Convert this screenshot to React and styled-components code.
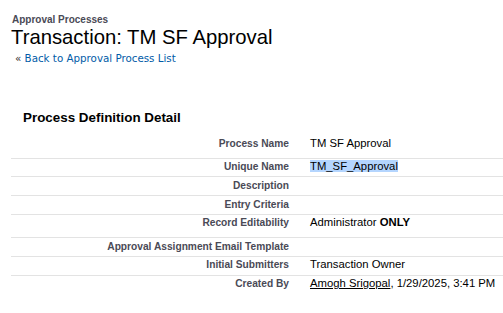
import styled, { createGlobalStyle } from "styled-components";

const GlobalStyle = createGlobalStyle`
  html, body {
    margin: 0;
    padding: 0;
    background: #fff;
  }
  body {
    font-family: "Liberation Sans", Arial, sans-serif;
    color: #000;
  }
`;

const Page = styled.div`
  padding: 14px 0 0 11px;
  width: 492px;
`;

const PageType = styled.div`
  font-size: 10px;
  font-weight: bold;
  line-height: 12px;
  color: #4a4a56;
  margin-left: 1px;
`;

const Title = styled.h1`
  margin: 0;
  font-size: 20.3px;
  font-weight: normal;
  line-height: 22px;
  color: #000;
`;

const Breadcrumb = styled.div`
  margin: 4px 0 0 4px;
  font-family: "DejaVu Sans", Verdana, sans-serif;
  font-size: 10.3px;
  line-height: 13px;
  color: #333;

  a {
    color: #015ba7;
    text-decoration: none;
  }
`;

const SectionTitle = styled.h2`
  margin: 44.6px 0 0 12px;
  font-size: 13.4px;
  font-weight: bold;
  line-height: 16px;
  color: #000;
`;

const DetailList = styled.div`
  margin-top: 9.8px;
`;

const Row = styled.div`
  display: grid;
  grid-template-columns: 278px 1fr;
  padding: 1.3px 0 ${({ $tall }) => ($tall ? "8px" : "3.5px")};
  border-bottom: 1px solid ${({ $last }) => ($last ? "transparent" : "#e3e3e3")};
`;

const Label = styled.div`
  text-align: right;
  font-size: 10.2px;
  font-weight: bold;
  line-height: 13px;
  color: #4a4a56;
`;

const Value = styled.div`
  padding-left: 21px;
  font-size: 11.3px;
  line-height: 13px;
  color: #000;
  white-space: nowrap;
`;

const Selected = styled.span`
  background: #b4d5fe;
`;

const UserLink = styled.a`
  color: #000;
  text-decoration: underline;
`;

const rows = [
  { label: "Process Name", value: "TM SF Approval", tall: true },
  { label: "Unique Name", value: <Selected>TM_SF_Approval</Selected> },
  { label: "Description", value: "" },
  { label: "Entry Criteria", value: "" },
  {
    label: "Record Editability",
    value: (
      <>
        Administrator <b>ONLY</b>
      </>
    ),
    tall: true,
  },
  { label: "Approval Assignment Email Template", value: "" },
  { label: "Initial Submitters", value: "Transaction Owner" },
  {
    label: "Created By",
    value: (
      <>
        <UserLink href="#">Amogh Srigopal</UserLink>, 1/29/2025, 3:41 PM
      </>
    ),
    last: true,
  },
];

export default function App() {
  return (
    <>
      <GlobalStyle />
      <Page>
        <PageType>Approval Processes</PageType>
        <Title>Transaction: TM SF Approval</Title>
        <Breadcrumb>
          «&nbsp;<a href="#">Back to Approval Process List</a>
        </Breadcrumb>
        <SectionTitle>Process Definition Detail</SectionTitle>
        <DetailList>
          {rows.map((r) => (
            <Row key={r.label} $tall={r.tall} $last={r.last}>
              <Label>{r.label}</Label>
              <Value>{r.value}</Value>
            </Row>
          ))}
        </DetailList>
      </Page>
    </>
  );
}
